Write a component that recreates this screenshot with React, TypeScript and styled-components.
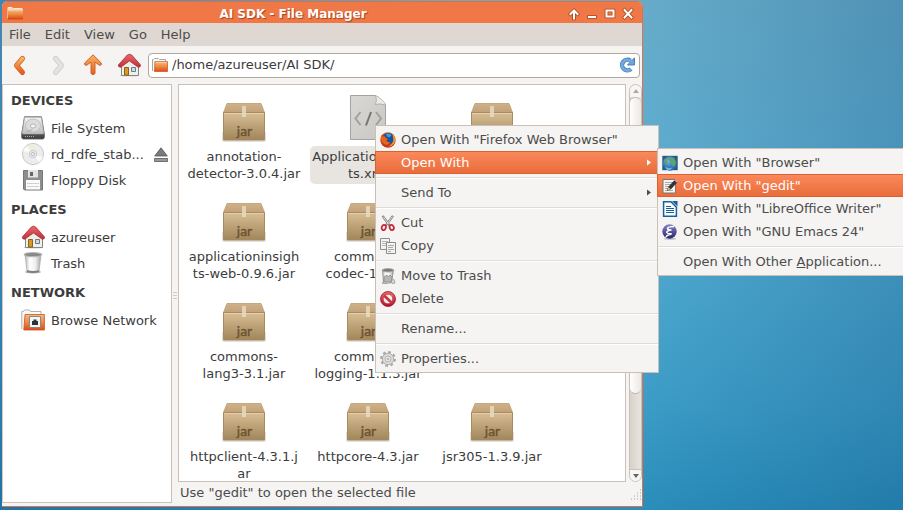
import React from 'react';
import styled, { createGlobalStyle, css } from 'styled-components';

const GlobalStyle = createGlobalStyle`
  * { box-sizing: border-box; }
  body { margin: 0; font: 13px/17px "DejaVu Sans", sans-serif; color: #3c3c3c; }
  button { font: inherit; color: inherit; background: none; border: 0; padding: 0; text-align: left; }
  ul { list-style: none; margin: 0; padding: 0; }
  svg { display: block; flex: none; }
`;

const Desktop = styled.main`
  position: relative;
  display: flex;
  height: 100vh;
  padding: 1px 260px 3px 2px;
  overflow: hidden;
  background:
    linear-gradient(90deg, rgba(10, 80, 140, 0.4) 0%, rgba(10, 80, 140, 0) 50%, rgba(10, 80, 140, 0) 71%, rgba(10, 70, 120, 0.25) 100%),
    linear-gradient(180deg, #67abc9 0%, #5fadcf 28%, #4aa6cd 58%, #3c9cc6 80%, #2a8dba 100%);
`;

const AppWindow = styled.section`
  display: flex;
  flex: 1;
  flex-direction: column;
  min-width: 0;
  border: 1px solid #e0714a;
  border-width: 0 1px 1px 0;
  border-radius: 6px 6px 0 0;
  background: #f5f4f2;
  overflow: hidden;
`;

const TitleBar = styled.header`
  display: flex;
  align-items: center;
  height: 22px;
  padding: 2px 6px 0 5px;
  background: #f07746;
  border-top: 1px solid #e56c3c;
`;

const Title = styled.h1`
  flex: 1;
  margin: 0;
  padding-right: 4px;
  font-size: 12px;
  line-height: 18px;
  text-align: center;
  color: #fff;
  text-shadow: 1px 1px 1px #a4441d;
`;

const WindowButtons = styled.div`
  display: flex;
  gap: 2px;
`;

const WindowButton = styled.button`
  width: 16px;
  height: 16px;
`;

const MenuBar = styled.nav`
  display: flex;
  gap: 14px;
  height: 23px;
  padding: 3px 7px;
  background: #dfd7d1;
  color: #4c4c4c;
`;

const ToolBar = styled.div`
  display: flex;
  align-items: center;
  gap: 12px;
  height: 38px;
  padding: 0 2px 0 7px;
`;

const ToolButton = styled.button`
  width: 24px;
  height: 24px;
`;

const AddressBox = styled.div`
  display: flex;
  flex: 1;
  align-items: center;
  gap: 4px;
  height: 25px;
  margin-left: -5px;
  padding: 0 4px 0 3px;
  border: 1px solid #b3a898;
  border-radius: 4px;
  background: #fff;
`;

const AddressInput = styled.input`
  flex: 1;
  min-width: 0;
  padding: 0 0 1px;
  border: 0;
  outline: 0;
  background: none;
  font: inherit;
  color: inherit;
`;

const Body = styled.div`
  display: flex;
  flex: 1;
  min-height: 0;
`;

const SideBar = styled.aside`
  width: 170px;
  margin-bottom: 3px;
  border: 1px solid #c9c0b7;
  border-left-color: #e3c4b6;
  background: #fff;
`;

const SideHeading = styled.h2`
  height: 30px;
  margin: 0;
  padding-left: 8px;
  font-size: 13px;
  line-height: 31px;
`;

const SideList = styled.ul`
  && { margin-bottom: 1px; }
`;

const SideItem = styled.button`
  display: flex;
  align-items: center;
  gap: 6px;
  width: 100%;
  height: 26px;
  padding: 0 3px 0 18px;
`;

const SideLabel = styled.span`
  flex: 1;
  white-space: nowrap;
`;

const Splitter = styled.div`
  display: flex;
  flex-direction: column;
  justify-content: center;
  align-items: center;
  gap: 2px;
  width: 6px;
`;

const Grip = styled.span`
  width: 4px;
  height: 1px;
  background: #d2cac2;
`;

const Content = styled.div`
  display: flex;
  flex: 1;
  flex-direction: column;
  min-width: 0;
`;

const ContentRow = styled.div`
  display: flex;
  flex: 1;
  gap: 3px;
  min-height: 0;
`;

const FilePane = styled.ul`
  display: grid;
  flex: 1;
  grid-template-columns: repeat(auto-fill, 124px);
  grid-auto-rows: 90px;
  row-gap: 10px;
  overflow: hidden;
  && { padding: 9px 3px 0; }
  border: 1px solid #c9c0b7;
  background: #fff;
`;

const FileItem = styled.li`
  display: flex;
  flex-direction: column;
  align-items: center;
  gap: 4px;
`;

const FileLabel = styled.span<{ $selected?: boolean }>`
  min-width: 116px;
  padding: 2px;
  border-radius: 5px;
  text-align: center;
  white-space: pre;
  background: ${(p) => (p.$selected ? '#e8e5e1' : 'transparent')};
`;

const ScrollBar = styled.div`
  display: flex;
  flex-direction: column;
  width: 13px;
  border: 1px solid #c9c0b7;
  border-radius: 7px;
  background: linear-gradient(90deg, #d9d2cb, #e9e4df);
  overflow: hidden;
`;

const ScrollArrow = styled.button<{ $down?: boolean }>`
  display: flex;
  align-items: center;
  justify-content: center;
  height: 12px;
  background: #f7f6f4;
  ${(p) => p.$down && css`
    margin-top: auto;
    border-top: 1px solid #c9c0b7;
  `}
`;

const ScrollThumb = styled.div`
  height: 297px;
  border: 1px solid #c0b7ad;
  border-width: 1px 0;
  border-radius: 7px;
  background: linear-gradient(90deg, #fff, #ece8e4);
`;

const StatusBar = styled.footer`
  display: flex;
  align-items: flex-end;
  justify-content: space-between;
  height: 24px;
  padding: 0 0 5px 2px;
  color: #4c4c4c;
`;

const Menu = styled.ul`
  position: absolute;
  && { padding: 2px 0; }
  border: 1px solid #c9c0b7;
  background: #f5f4f2;
  color: #4c4c4c;
`;

const ContextMenu = styled(Menu)`
  top: 125px;
  left: 375px;
  width: 284px;
`;

const SubMenu = styled(Menu)`
  top: 148px;
  left: 657px;
  width: 260px;
`;

const MenuItem = styled.button<{ $active?: boolean }>`
  display: flex;
  align-items: center;
  gap: 5px;
  width: 100%;
  height: 23px;
  padding: 0 7px 0 4px;
  white-space: nowrap;
  ${(p) =>
    p.$active &&
    css`
      color: #fff;
      background: linear-gradient(#fb8a5c, #e96b39);
      box-shadow: inset 0 1px #d9602f, inset 0 -1px #d9602f, -1px 0 #d9602f;
    `}
`;

const MenuIcon = styled.span`
  width: 16px;
  height: 16px;
`;

const MenuText = styled.span`
  flex: 1;
`;

const Separator = styled.li`
  height: 2px;
  margin: 3px 0 2px;
  border-top: 1px solid #dfdcd8;
  background: #fff;
`;

const SharedDefs = styled.svg`
  position: absolute;
`;

const Gradients = () => (
  <SharedDefs width="0" height="0" aria-hidden="true">
    <defs>
      <linearGradient id="box" x1="0" y1="0" x2="0" y2="1"><stop stopColor="#d8be94" /><stop offset="1" stopColor="#a1855b" /></linearGradient>
      <linearGradient id="lid" x1="0" y1="0" x2="0" y2="1"><stop stopColor="#d0b287" /><stop offset="1" stopColor="#c1a079" /></linearGradient>
      <linearGradient id="orange" x1="0" y1="0" x2="0" y2="1"><stop stopColor="#f6bd80" /><stop offset=".5" stopColor="#ee8a42" /><stop offset="1" stopColor="#e04a17" /></linearGradient>
      <linearGradient id="arrow" x1="0" y1="0" x2="0" y2="1"><stop stopColor="#f6b561" /><stop offset="1" stopColor="#ed5a1e" /></linearGradient>
      <linearGradient id="roof" x1="0" y1="0" x2="0" y2="1"><stop stopColor="#e56a6a" /><stop offset="1" stopColor="#c22f38" /></linearGradient>
      <linearGradient id="silver" x1="0" y1="0" x2="0" y2="1"><stop stopColor="#f2f2f1" /><stop offset="1" stopColor="#bdbdbb" /></linearGradient>
      <linearGradient id="dark" x1="0" y1="0" x2="0" y2="1"><stop stopColor="#8b8b8b" /><stop offset="1" stopColor="#3f3f3f" /></linearGradient>
      <linearGradient id="bin" x1="0" y1="0" x2="1" y2="0"><stop stopColor="#b8b8b8" /><stop offset=".3" stopColor="#fff" /><stop offset=".65" stopColor="#eee" /><stop offset="1" stopColor="#a7a7a7" /></linearGradient>
      <linearGradient id="paper" x1="0" y1="0" x2="1" y2="1"><stop stopColor="#d9d8d5" /><stop offset="1" stopColor="#c8c7c3" /></linearGradient>
      <radialGradient id="globe" cx=".4" cy=".35"><stop stopColor="#7cb5ef" /><stop offset="1" stopColor="#236bb5" /></radialGradient>
      <radialGradient id="fox" cx=".65" cy=".3"><stop stopColor="#f7c02d" /><stop offset=".6" stopColor="#eb7418" /><stop offset="1" stopColor="#c5371b" /></radialGradient>
      <linearGradient id="emacs" x1="0" y1="0" x2="0" y2="1"><stop stopColor="#8682ca" /><stop offset="1" stopColor="#2a246c" /></linearGradient>
      <linearGradient id="ban" x1="0" y1="0" x2="0" y2="1"><stop stopColor="#ec6f5d" /><stop offset="1" stopColor="#b40f36" /></linearGradient>
    </defs>
  </SharedDefs>
);

const Folder = ({ size = 16 }: { size?: number }) => (
  <svg width={size} height={size} viewBox="0 0 16 16">
    <path d="M.5 14V2.500h1l1-1h4l1 1h6V4" fill="#fafafa" stroke="#a9a6a2" />
    <path d="M2.500 14.500l.4-10h12.600v10z" fill="url(#orange)" stroke="#cf5b29" strokeWidth=".8" />
    <path d="M3.700 5.300h11" stroke="#fbdcbc" strokeWidth=".8" />
  </svg>
);

const TitleFolder = () => (
  <svg width="17" height="16" viewBox="0 0 17 16">
    <path d="M1 12V1.500h4l1 1h9V5" fill="#f8d3be" stroke="#fbe8dc" />
    <path d="M1 3.500h15V13H1z" fill="url(#orange)" />
    <path d="M1 4h15" stroke="#fbdcbc" />
    <path d="M1 13h15" stroke="#c94f1d" />
  </svg>
);

const Home = ({ size = 24 }: { size?: number }) => (
  <svg width={size} height={size} viewBox="0 0 24 24">
    <ellipse cx="12.5" cy="22.5" rx="10" ry="1" fill="#d5d3cf" />
    <path d="M4.500 12v10.500h17V12l-8.500-7.500z" fill="#eeeeec" stroke="#858782" />
    <path d="M7.500 14.500h4v7.500h-4z" fill="#d99a20" stroke="#8d611a" />
    <path d="M14.500 14.500h4v4h-4z" fill="#c9dbe3" stroke="#6f7a7e" />
    <path d="M1.300 12L10.300 2q2.200-1.700 4.400 0L23.600 12q0 2.500-2.400 2.200L12.500 8 3.700 14.200q-2.400.3-2.400-2.200z" fill="url(#roof)" stroke="#a3242f" strokeWidth=".7" />
  </svg>
);

const Drive = () => (
  <svg width="24" height="24" viewBox="0 0 24 24">
    <path d="M3.500.8h17l2.800 17v3.500q0 1.700-1.700 1.700H2.400Q.7 23 .7 21.300v-3.500z" fill="url(#dark)" stroke="#555" strokeWidth=".8" />
    <path d="M3.700 1.200h16.600l2.500 15.500q.1 1.300-1.100 1.300H2.400q-1.300 0-1.200-1.300z" fill="url(#silver)" stroke="#aaa" strokeWidth=".6" />
    <ellipse cx="12" cy="9.500" rx="7.500" ry="6.500" fill="#dcdcda" stroke="#b9b9b7" strokeWidth=".8" />
    <ellipse cx="12" cy="10" rx="2.600" ry="2" fill="#f6f6f6" stroke="#aaa" strokeWidth=".8" />
    <path d="M6 15.500l5.500-2" stroke="#aaa" />
    <path d="M4 20.500h10" stroke="#aaa" strokeDasharray="1 1" />
  </svg>
);

const Disc = () => (
  <svg width="24" height="24" viewBox="0 0 24 24">
    <circle cx="12" cy="12" r="10.600" fill="#ececec" stroke="#c9c9c9" />
    <path d="M12 12L2 9a10 10 0 0 1 4-5zM12 12l10 3a10 10 0 0 1-4 5z" fill="#fafafa" />
    <path d="M12 12L8 3a10 10 0 0 1 5-1z" fill="#f6ecd4" />
    <circle cx="12" cy="12" r="3.800" fill="#e6e4ec" stroke="#cfcfcf" />
    <circle cx="12" cy="12" r="1.500" fill="#fff" stroke="#bbb" />
  </svg>
);

const Floppy = () => (
  <svg width="24" height="24" viewBox="0 0 24 24">
    <path d="M2.500 2.500h19v19.500h-18l-1-1z" fill="#8e8e8e" stroke="#777" />
    <path d="M7 2h10v7.500H7z" fill="#e3e3e3" />
    <path d="M9 4h3v4H9z" fill="#666" />
    <path d="M5 12h14v9.500H5z" fill="#fafafa" />
    <path d="M6 15.500h12M6 18.500h12" stroke="#d0d0d0" />
  </svg>
);

const Eject = () => (
  <svg width="14" height="15" viewBox="0 0 14 15">
    <path d="M7 .8L13.300 9H.7z" fill="#7a7a7a" stroke="#555" strokeWidth=".8" />
    <path d="M.5 11.500h13v3H.5z" fill="#999" stroke="#555" strokeWidth=".8" />
  </svg>
);

const Bin = ({ size = 24 }: { size?: number }) => (
  <svg width={size} height={size} viewBox="0 0 24 24">
    <ellipse cx="12" cy="21" rx="8" ry="1.500" fill="#aaa" />
    <path d="M4 4l2 16.500q6 2 12 0L20 4z" fill="url(#bin)" stroke="#a0a0a0" strokeWidth=".6" />
    <path d="M6 19q6 2 12 0l-.3 2q-5.700 2-11.400 0z" fill="#7f7f7f" />
    <ellipse cx="12" cy="3.600" rx="8.800" ry="2.100" fill="#888" stroke="#b9b9b9" strokeWidth="1.200" />
  </svg>
);

const Network = () => (
  <svg width="24" height="24" viewBox="0 0 24 24">
    <path d="M.8 21V3.500h1.700l1-1.500h5l1 1.500H20V6" fill="#fafafa" stroke="#b3b0ac" />
    <path d="M2.800 22L4 6.500h19.400V22z" fill="url(#orange)" stroke="#c8501f" strokeWidth=".8" />
    <path d="M8.500 8.500h11v11h-11z" fill="#f4f4f3" stroke="#898782" />
    <path d="M11 17v-4h1.500v-1.500h3V13H17v4z" fill="#2e3436" />
  </svg>
);

const Jar = () => (
  <svg width="48" height="48" viewBox="0 0 48 48">
    <path d="M2 38h44v8q0 2-2 2H4q-2 0-2-2z" fill="#e3e1de" />
    <path d="M7 9.500h34L44.700 19H3.300z" fill="url(#lid)" stroke="#b3956a" strokeWidth=".7" />
    <path d="M3.500 18.500h41v27.500h-41z" fill="url(#box)" stroke="#a98b5f" />
    <path d="M4 19.500h40" stroke="#e6d0ab" />
    <path d="M22 12h4v11h-4z" fill="#e8dac1" opacity=".85" />
    <text x="24.500" y="42" textAnchor="middle" fontFamily="Lato, sans-serif" fontSize="14" fill="#6a5532" stroke="#6a5532" strokeWidth=".4">jar</text>
  </svg>
);

const XmlFile = () => (
  <svg width="48" height="48" viewBox="0 0 48 48">
    <path d="M6.500 1.500h25L41.500 11v34.500h-35z" fill="url(#paper)" stroke="#a5a39e" />
    <path d="M31.500 1.500q2 6-.5 9 5-1.500 10.500.5 0-2-4-5.500t-6-4z" fill="#ecebe8" stroke="#aaa8a3" strokeWidth=".8" />
    <path d="M16.500 18l-5 6.500 5 6.500M32 18l5 6.500-5 6.500" fill="none" stroke="#a3a19c" strokeWidth="2" />
    <path d="M27 18l-5 13.500" stroke="#777570" strokeWidth="2" />
  </svg>
);

const chevronPaths = { left: 'M13.500 5.500l-6 7 6 7', right: 'M10.500 5.500l6 7-6 7' };

const Chevron = ({ side }: { side: 'left' | 'right' }) => (
  <svg width="24" height="24" viewBox="0 0 24 24" fill="none" strokeLinecap="round" strokeLinejoin="round">
    <path d={chevronPaths[side]} stroke={side === 'right' ? '#cbc9c6' : '#c8632c'} strokeWidth="5" />
    <path d={chevronPaths[side]} stroke={side === 'right' ? '#e3e2e0' : 'url(#arrow)'} strokeWidth="3.600" />
  </svg>
);

const UpArrow = () => (
  <svg width="24" height="24" viewBox="0 0 24 24">
    <path d="M12 1.800l8.300 8.200q.8 2.500-2 2.300L14 9v11.500q-2 2.400-4 0V9l-4.300 3.300q-2.800.2-2-2.300z" fill="url(#arrow)" stroke="#c8632c" strokeLinejoin="round" />
  </svg>
);

const Reload = () => (
  <svg width="16" height="16" viewBox="0 0 16 16">
    <path d="M11.500 3.800A5.300 5.300 0 1 0 12 12" fill="none" stroke="#4a80bb" strokeWidth="4.400" />
    <path d="M15.500.8v7.200h-7z" fill="#6da3dc" stroke="#4a80bb" />
    <path d="M12.500 5A5.300 5.300 0 1 0 11.600 12.300" fill="none" stroke="#74a9de" strokeWidth="2.800" />
  </svg>
);

const Firefox = () => (
  <svg width="16" height="16" viewBox="0 0 16 16">
    <circle cx="8" cy="8" r="7.700" fill="url(#fox)" />
    <path d="M3.500 5.500Q4 1 8.500.7 13 1 14 6q.3 4-3 5.700-4 1-6-2.200z" fill="#1f4f9c" />
    <path d="M6 2Q9 .5 11.500 3L9.500 5.500 7 4.500z" fill="#3e9be0" />
    <path d="M1 3l1.500 1.500L5.200 4.300l.3 1.700L8 6.500 6.500 8.500q1 2.500 4 1.500-1.500 3.500-5.500 2.500Q0 10 1 3z" fill="#e7651b" />
    <path d="M12.500 2.500q4 4.500 1.500 9-2.500 3-5.500 3 5-3 5-7z" fill="#f5a623" />
  </svg>
);

const Scissors = () => (
  <svg width="16" height="16" viewBox="0 0 16 16">
    <path d="M2.500.8l7.500 10M13 .8l-7.500 10" stroke="#777" strokeWidth="2.200" />
    <path d="M3 1.500l6 8M12.500 1.500l-6 8" stroke="#eee" strokeWidth=".9" />
    <ellipse cx="3.800" cy="12.500" rx="2" ry="2.600" fill="none" stroke="#c22a38" strokeWidth="1.800" transform="rotate(25 3.800 12.500)" />
    <ellipse cx="11.700" cy="12.500" rx="2" ry="2.600" fill="none" stroke="#c22a38" strokeWidth="1.800" transform="rotate(-25 11.700 12.500)" />
  </svg>
);

const Copy = () => (
  <svg width="16" height="16" viewBox="0 0 16 16">
    <path d="M.5.5h9v11h-9z" fill="#f3f3f2" stroke="#8c8c89" />
    <path d="M2 3.500h6M2 5.500h6M2 7.500h4" stroke="#b5b5b2" />
    <path d="M6.500 4.500h9v11h-9z" fill="#f3f3f2" stroke="#8c8c89" />
    <path d="M8 7.500h6M8 9.500h5M8 11.500h6M8 13.500h3" stroke="#aaa" />
  </svg>
);

const FullBin = () => (
  <svg width="16" height="16" viewBox="0 0 16 16">
    <path d="M2.500 2l1 12.500q4 1.500 8 0L13.500 2z" fill="url(#bin)" stroke="#888" strokeWidth=".8" />
    <path d="M4 9l3-2 1 2 2-2 2 2-1 5H4z" fill="#b6b8b5" stroke="#858783" strokeWidth=".7" />
    <ellipse cx="8" cy="2.300" rx="5.700" ry="1.700" fill="#777" stroke="#aaa" />
    <path d="M11 12.500l3-1 1 3.500-3 .5zM2.500 14.500l3-1 1 2h-4z" fill="#dededc" stroke="#8b8b89" strokeWidth=".7" />
  </svg>
);

const Ban = () => (
  <svg width="16" height="16" viewBox="0 0 16 16">
    <circle cx="8" cy="8" r="7.500" fill="url(#ban)" stroke="#a1122e" strokeWidth=".8" />
    <circle cx="8" cy="8" r="4.800" fill="#f1efee" stroke="#b01a30" strokeWidth=".6" />
    <path d="M4 4.500l8 7.500" stroke="#cb3441" strokeWidth="2.800" />
  </svg>
);

const Gear = () => (
  <svg width="16" height="16" viewBox="0 0 16 16">
    <circle cx="8" cy="8" r="6.700" fill="none" stroke="#a6a6a4" strokeWidth="2.400" strokeDasharray="2.630 2.630" />
    <circle cx="8" cy="8" r="5.700" fill="#dcdcda" stroke="#aeaeac" />
    <circle cx="8" cy="8" r="3" fill="#e8e8e7" stroke="#b5b5b3" />
    <circle cx="8" cy="8" r="1.300" fill="#bbb" />
  </svg>
);

const Browser = () => (
  <svg width="16" height="16" viewBox="0 0 16 16">
    <path d="M.3 .8h15.400v14.400H.3z" fill="#2f5680" />
    <circle cx="8" cy="8.500" r="7.200" fill="url(#globe)" />
    <path d="M8 2l4 1 2 4-1 4-2 1-1-3-2-1-1-3zM2 5l2-2 2 1-1 2 1 2-1 2-2-1z" fill="#5aa56a" />
    <path d="M3 12l4 1 4-.5-3 2.500H5z" fill="#68b7dc" />
  </svg>
);

const Gedit = () => (
  <svg width="16" height="16" viewBox="0 0 16 16">
    <path d="M1 1.500h12.500v13.500H1z" fill="#f4f4f2" stroke="#777" />
    <path d="M3 4.500h8M3 6.500h6M3 8.500h5M3 10.500h3M3 12.500h8" stroke="#aaa" />
    <path d="M5.500 12.300l1-3.300 6-6.500 2.300 2-6 6.500z" fill="#343434" stroke="#222" strokeWidth=".6" />
    <path d="M12.300 2.600l1.500-1.500 2 1.800-1.300 1.500z" fill="#e58ab0" />
    <path d="M5.500 12.300l1-3 2 1.800z" fill="#ecd07c" />
  </svg>
);

const Writer = () => (
  <svg width="16" height="16" viewBox="0 0 16 16">
    <path d="M1.600.8H9L14.400 6.200v9H1.600z" fill="#fff" stroke="#14629b" strokeWidth="1.500" />
    <path d="M10 0h5.500v5.500z" fill="#14629b" />
    <path d="M4 5.500h5M4 7.500h8M4 9.500h8M4 11.500h8" stroke="#14629b" />
  </svg>
);

const Emacs = () => (
  <svg width="16" height="16" viewBox="0 0 16 16">
    <ellipse cx="8" cy="14.800" rx="6" ry="1" fill="#bbb" />
    <circle cx="7.500" cy="7.500" r="7.200" fill="url(#emacs)" />
    <path d="M12 2.500Q6 2.500 5.500 4.500q.3 1.500 4 1.500-5 .6-4.800 2.500.8 1.500 5 1.200Q5 11 4 13" fill="none" stroke="#fff" strokeWidth="1.500" />
  </svg>
);

const Caret = () => (
  <svg width="4" height="7" viewBox="0 0 4 7"><path d="M0 .5v6l4-3z" fill="currentColor" /></svg>
);

type FileEntry = { name: string; kind?: 'xml' };
const files: FileEntry[] = [
  { name: 'annotation-\ndetector-3.0.4.jar' },
  { name: 'ApplicationInsigh\nts.xml', kind: 'xml' },
  { name: '' },
  { name: 'applicationinsigh\nts-web-0.9.6.jar' },
  { name: 'commons-\ncodec-1.6.jar' },
  { name: '' },
  { name: 'commons-\nlang3-3.1.jar' },
  { name: 'commons-\nlogging-1.1.3.jar' },
  { name: '' },
  { name: 'httpclient-4.3.1.j\nar' },
  { name: 'httpcore-4.3.jar' },
  { name: 'jsr305-1.3.9.jar' },
];

type Place = { label: string; icon: React.ReactNode; extra?: React.ReactNode };
const places: { heading: string; items: Place[] }[] = [
  {
    heading: 'DEVICES',
    items: [
      { label: 'File System', icon: <Drive /> },
      { label: 'rd_rdfe_stab...', icon: <Disc />, extra: <Eject /> },
      { label: 'Floppy Disk', icon: <Floppy /> },
    ],
  },
  { heading: 'PLACES', items: [{ label: 'azureuser', icon: <Home /> }, { label: 'Trash', icon: <Bin /> }] },
  { heading: 'NETWORK', items: [{ label: 'Browse Network', icon: <Network /> }] },
];

type Entry = { label: React.ReactNode; icon?: React.ReactNode; active?: boolean; sub?: boolean } | null;

const contextEntries: Entry[] = [
  { label: 'Open With "Firefox Web Browser"', icon: <Firefox /> },
  { label: 'Open With', active: true, sub: true },
  null,
  { label: 'Send To', sub: true },
  null,
  { label: 'Cut', icon: <Scissors /> },
  { label: 'Copy', icon: <Copy /> },
  null,
  { label: 'Move to Trash', icon: <FullBin /> },
  { label: 'Delete', icon: <Ban /> },
  null,
  { label: 'Rename...' },
  null,
  { label: 'Properties...', icon: <Gear /> },
];

const openWithEntries: Entry[] = [
  { label: 'Open With "Browser"', icon: <Browser /> },
  { label: 'Open With "gedit"', icon: <Gedit />, active: true },
  { label: 'Open With "LibreOffice Writer"', icon: <Writer /> },
  { label: 'Open With "GNU Emacs 24"', icon: <Emacs /> },
  null,
  { label: <>Open With Other <u>A</u>pplication...</> },
];

const Entries = ({ entries }: { entries: Entry[] }) => (
  <>
    {entries.map((e, i) =>
      e ? (
        <li key={i} role="none">
          <MenuItem role="menuitem" $active={e.active}>
            <MenuIcon>{e.icon}</MenuIcon>
            <MenuText>{e.label}</MenuText>
            {e.sub && <Caret />}
          </MenuItem>
        </li>
      ) : (
        <Separator key={i} role="separator" />
      ),
    )}
  </>
);

const windowControls = [
  { label: 'Shade', d: 'M8 12.500V5M4.500 8L8 4.500 11.500 8' },
  { label: 'Minimize', d: 'M5 11h6' },
  { label: 'Maximize', d: 'M4.500 4.500h7v6h-7z' },
  { label: 'Close', d: 'M4.500 4l7 7.500M11.500 4l-7 7.500' },
];

export default function App() {
  return (
    <Desktop>
      <GlobalStyle />
      <Gradients />
      <AppWindow>
        <TitleBar>
          <TitleFolder />
          <Title>AI SDK - File Manager</Title>
          <WindowButtons>
            {windowControls.map((c) => (
              <WindowButton key={c.label} aria-label={c.label}>
                <svg width="16" height="16" viewBox="0 0 16 16" fill="none" strokeLinecap="square">
                  <path d={c.d} stroke="#a8481f" strokeWidth="3.600" />
                  <path d={c.d} stroke="#fff" strokeWidth="2" />
                </svg>
              </WindowButton>
            ))}
          </WindowButtons>
        </TitleBar>
        <MenuBar>
          {['File', 'Edit', 'View', 'Go', 'Help'].map((m) => (
            <button key={m}>{m}</button>
          ))}
        </MenuBar>
        <ToolBar>
          <ToolButton aria-label="Back"><Chevron side="left" /></ToolButton>
          <ToolButton aria-label="Forward" disabled><Chevron side="right" /></ToolButton>
          <ToolButton aria-label="Up"><UpArrow /></ToolButton>
          <ToolButton aria-label="Home"><Home /></ToolButton>
          <AddressBox>
            <Folder />
            <AddressInput aria-label="Location" defaultValue="/home/azureuser/AI SDK/" />
            <button aria-label="Reload"><Reload /></button>
          </AddressBox>
        </ToolBar>
        <Body>
          <SideBar>
            {places.map((g) => (
              <React.Fragment key={g.heading}>
                <SideHeading>{g.heading}</SideHeading>
                <SideList>
                  {g.items.map((it) => (
                    <li key={it.label}>
                      <SideItem>
                        {it.icon}
                        <SideLabel>{it.label}</SideLabel>
                        {it.extra}
                      </SideItem>
                    </li>
                  ))}
                </SideList>
              </React.Fragment>
            ))}
          </SideBar>
          <Splitter><Grip /><Grip /><Grip /></Splitter>
          <Content>
            <ContentRow>
              <FilePane>
                {files.map((f, i) => (
                  <FileItem key={i}>
                    {f.kind === 'xml' ? <XmlFile /> : <Jar />}
                    {f.name && <FileLabel $selected={f.kind === 'xml'}>{f.name}</FileLabel>}
                  </FileItem>
                ))}
              </FilePane>
              <ScrollBar>
                <ScrollArrow aria-label="Scroll up">
                  <svg width="6" height="4"><path d="M0 4l3-4 3 4z" fill="#aaa" /></svg>
                </ScrollArrow>
                <ScrollThumb />
                <ScrollArrow $down aria-label="Scroll down">
                  <svg width="6" height="4"><path d="M0 0l3 4 3-4z" fill="#666" /></svg>
                </ScrollArrow>
              </ScrollBar>
            </ContentRow>
            <StatusBar>
              Use "gedit" to open the selected file
              <svg width="12" height="12" viewBox="0 0 12 12">
                <path d="M1 10h1M4 10h1M7 10h1M10 10h1M4 7h1M7 7h1M10 7h1M7 4h1M10 4h1M10 1h1" stroke="#a9a29b" />
              </svg>
            </StatusBar>
          </Content>
        </Body>
      </AppWindow>
      <ContextMenu role="menu"><Entries entries={contextEntries} /></ContextMenu>
      <SubMenu role="menu"><Entries entries={openWithEntries} /></SubMenu>
    </Desktop>
  );
}
